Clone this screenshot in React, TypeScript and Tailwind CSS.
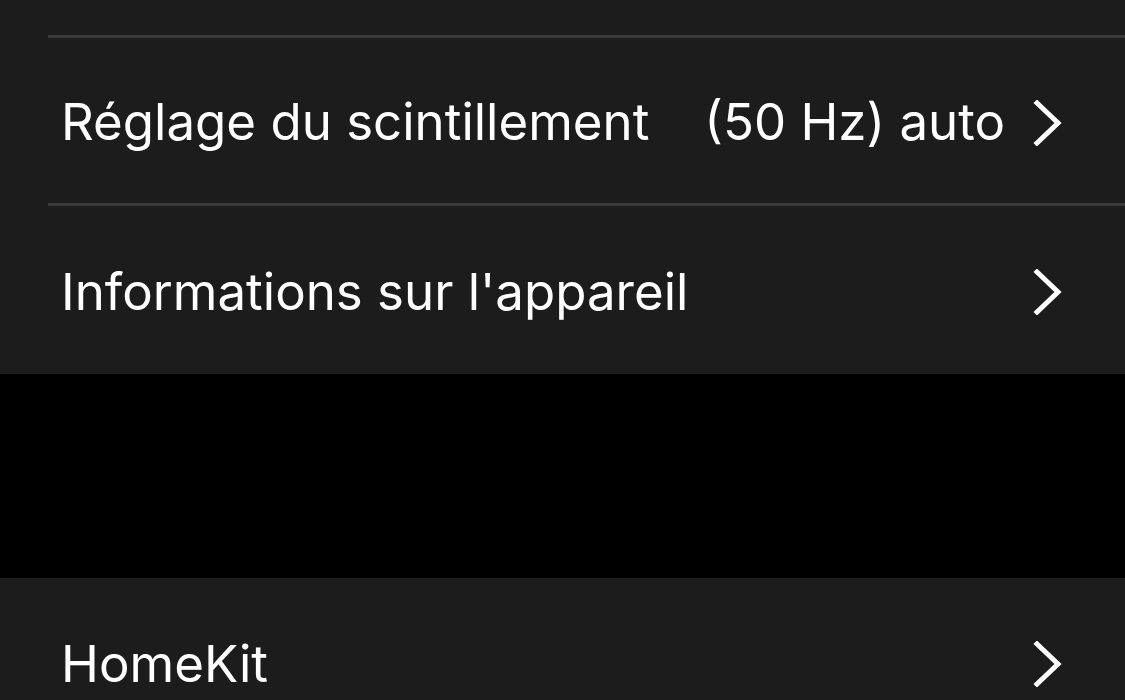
import React from "react";

function Chevron() {
  return (
    <svg width="30" height="46" viewBox="0 0 30 46" className="shrink-0">
      <path d="M4 3 L25 23 L4 43" fill="none" stroke="#ffffff" strokeWidth="5" strokeLinecap="square" />
    </svg>
  );
}

function Row({ label, value, divider }: { label: string; value?: string; divider?: boolean }) {
  return (
    <div className="pl-[48px]">
      <div className={`h-[168px] flex items-center justify-between pt-[4px] pl-[13px] pr-[62px] ${divider ? "border-b-[3px] border-[#383838]" : ""}`}>
        <span className="text-white">{label}</span>
        <div className="flex items-center gap-[28px]">
          {value ? <span className="text-white">{value}</span> : null}
          <Chevron />
        </div>
      </div>
    </div>
  );
}

export default function App() {
  return (
    <div
      className="w-[1125px] h-[700px] overflow-hidden bg-black text-[51px]"
      style={{ fontFamily: "Inter, 'Noto Sans', sans-serif" }}
    >
      <div className="bg-[#1c1c1c]">
        <div className="h-[38px] pl-[48px]">
          <div className="h-full border-b-[3px] border-[#383838]"></div>
        </div>
        <Row label="Réglage du scintillement" value="(50 Hz) auto" divider />
        <Row label="Informations sur l'appareil" />
      </div>
      <div className="h-[204px]"></div>
      <div className="bg-[#1c1c1c]">
        <Row label="HomeKit" />
      </div>
    </div>
  );
}
